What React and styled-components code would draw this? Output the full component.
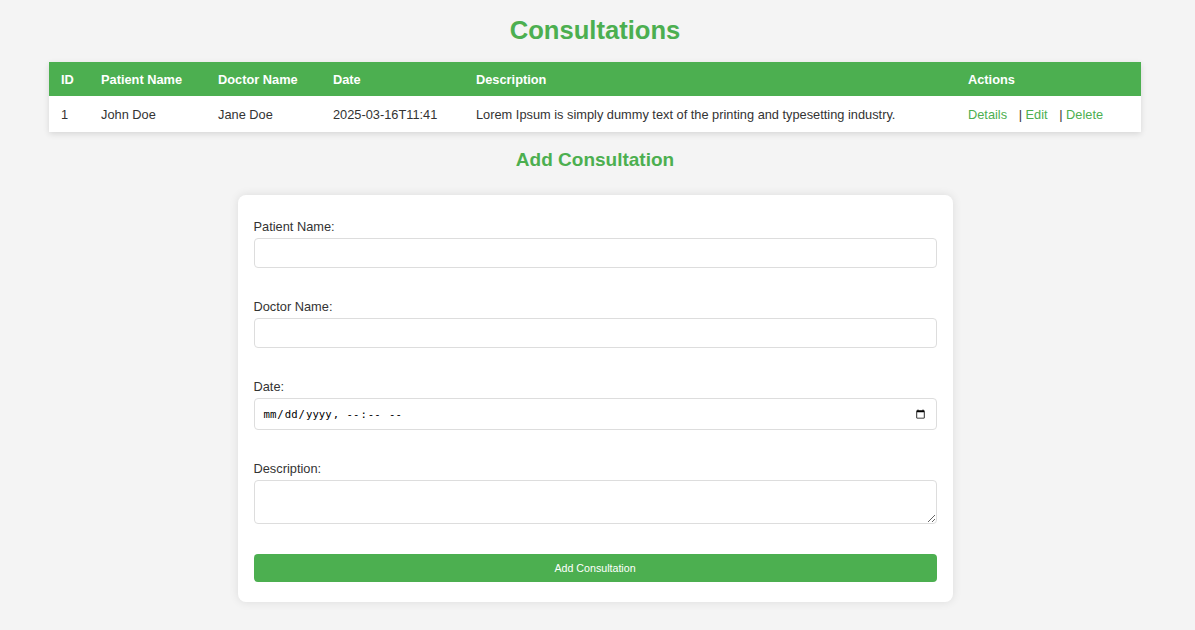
import React, { useState } from 'react';
import styled, { createGlobalStyle } from 'styled-components';

const GlobalStyle = createGlobalStyle`
    body {
        margin: 0;
        background: #f4f4f4;
        font-family: "Liberation Sans", Arial, sans-serif;
        color: #333;
    }
`;

const consultations = [
    {
        id: 1,
        patientName: 'John Doe',
        doctorName: 'Jane Doe',
        date: '2025-03-16T11:41',
        description: 'Lorem Ipsum is simply dummy text of the printing and typesetting industry.'
    }
];

const columns = [
    { label: 'ID', width: 40 },
    { label: 'Patient Name', width: 117 },
    { label: 'Doctor Name', width: 115 },
    { label: 'Date', width: 143 },
    { label: 'Description', width: 492 },
    { label: 'Actions', width: 185 },
];

export default function App() {
    const initialValues = { patientName: '', doctorName: '', date: '', description: '' };
    const [values, setValues] = useState(initialValues);

    const handleChange = e => {
        const { name, value } = e.target;
        setValues({ ...values, [name]: value });
    };

    const handleSubmit = e => {
        e.preventDefault();
        setValues(initialValues);
    };

    return (
        <>
            <GlobalStyle />
            <Page>
                <Title>Consultations</Title>
                <Table>
                    <colgroup>
                        {columns.map(c => <col key={c.label} style={{ width: c.width }} />)}
                    </colgroup>
                    <thead>
                        <tr>
                            {columns.map(c => <Th key={c.label}>{c.label}</Th>)}
                        </tr>
                    </thead>
                    <tbody>
                        {consultations.map(c => (
                            <tr key={c.id}>
                                <Td>{c.id}</Td>
                                <Td>{c.patientName}</Td>
                                <Td>{c.doctorName}</Td>
                                <Td>{c.date}</Td>
                                <Td>{c.description}</Td>
                                <Td>
                                    <ActionLink href="#">Details</ActionLink> | <ActionLink href="#">Edit</ActionLink> | <ActionLink href="#">Delete</ActionLink>
                                </Td>
                            </tr>
                        ))}
                    </tbody>
                </Table>

                <SubTitle>Add Consultation</SubTitle>
                <Form onSubmit={handleSubmit}>
                    <Label htmlFor="patientName">Patient Name:</Label>
                    <Input id="patientName" name="patientName" type="text" value={values.patientName} onChange={handleChange} />

                    <Label htmlFor="doctorName">Doctor Name:</Label>
                    <Input id="doctorName" name="doctorName" type="text" value={values.doctorName} onChange={handleChange} />

                    <Label htmlFor="date">Date:</Label>
                    <DateInput id="date" name="date" type="datetime-local" value={values.date} onChange={handleChange} />

                    <Label htmlFor="description">Description:</Label>
                    <TextArea id="description" name="description" value={values.description} onChange={handleChange} />

                    <Button type="submit">Add Consultation</Button>
                </Form>
            </Page>
        </>
    );
};

const Page = styled.main`
    width: 1190px;
    padding: 15px 0 28px;
`;

const Title = styled.h1`
    margin: 0 0 17px;
    text-align: center;
    color: #4caf50;
    font-size: 25.6px;
    line-height: 30px;
`;

const Table = styled.table`
    width: 1092px;
    margin: 0 auto;
    border-collapse: collapse;
    table-layout: fixed;
    background: #fff;
    box-shadow: 0 2px 6px rgba(0, 0, 0, 0.12);
`;

const Th = styled.th`
    padding: 10px 12px 9px;
    background: #4caf50;
    color: #fff;
    font-size: 12.8px;
    line-height: 15px;
    font-weight: bold;
    text-align: left;
`;

const Td = styled.td`
    padding: 11px 12px 10px;
    font-size: 12.8px;
    line-height: 15px;
    color: #333;
    white-space: nowrap;
`;

const ActionLink = styled.a`
    color: #4caf50;
    text-decoration: none;
    margin-right: 8px;
`;

const SubTitle = styled.h2`
    margin: 17px 0 24px;
    text-align: center;
    color: #4caf50;
    font-size: 19px;
    line-height: 22px;
`;

const Form = styled.form`
    width: 715px;
    box-sizing: border-box;
    margin: 0 auto;
    padding: 24px 16px 20px;
    background: #fff;
    border-radius: 8px;
    box-shadow: 0 0 10px rgba(0, 0, 0, 0.1);
    display: flex;
    flex-direction: column;
`;

const Label = styled.label`
    display: block;
    margin-bottom: 4px;
    font-size: 12.8px;
    line-height: 15px;
    color: #333;
`;

const Input = styled.input`
    box-sizing: border-box;
    width: 100%;
    height: 30px;
    margin: 0 0 31px;
    padding: 6px 8px;
    border: 1px solid #ddd;
    border-radius: 4px;
    background: #fff;
    font-size: 10.67px;
`;

const DateInput = styled(Input)`
    height: 32px;
`;

const TextArea = styled.textarea`
    box-sizing: border-box;
    width: 100%;
    height: 44px;
    margin: 0 0 30px;
    padding: 6px 8px;
    border: 1px solid #ddd;
    border-radius: 4px;
    resize: vertical;
    font-size: 10.67px;
`;

const Button = styled.button`
    width: 100%;
    height: 28px;
    border: none;
    border-radius: 4px;
    background: #4caf50;
    color: #fff;
    font-family: "Liberation Sans", Arial, sans-serif;
    font-size: 10.67px;
    cursor: pointer;
`;
